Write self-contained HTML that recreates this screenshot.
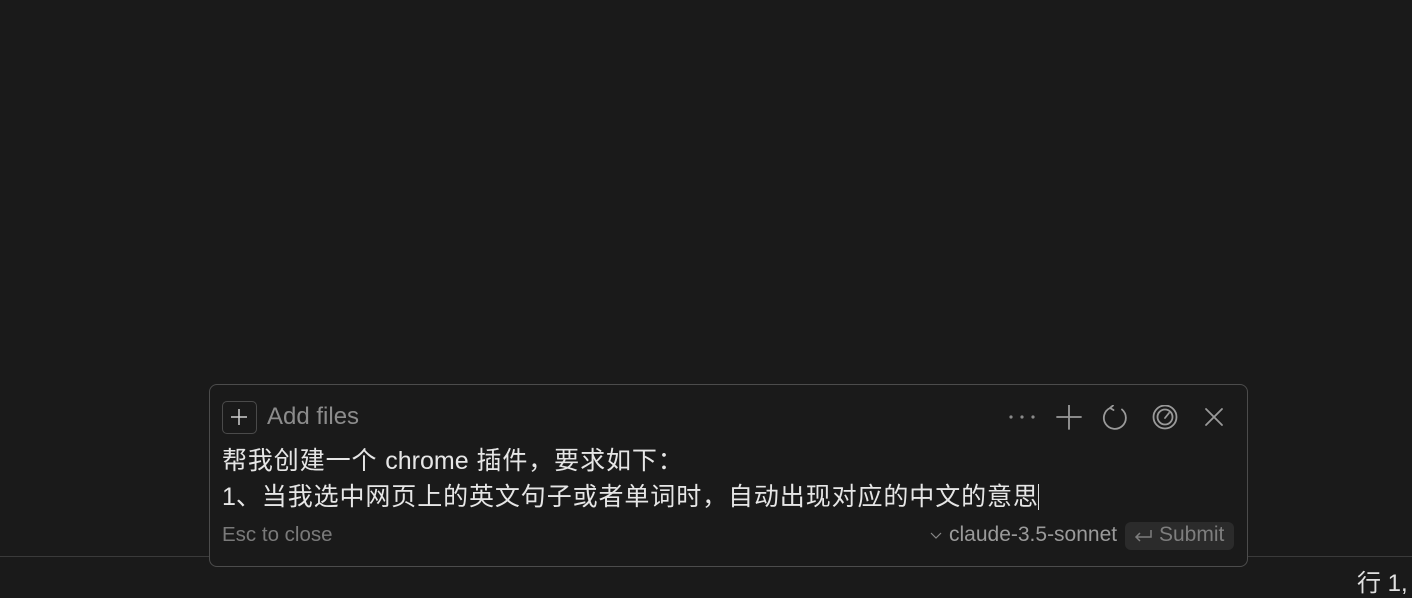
<!DOCTYPE html>
<html><head><meta charset="utf-8"><style>
*{margin:0;padding:0;box-sizing:border-box}
body{width:1412px;height:596px;background:#1a1a1a;position:relative;overflow:hidden;font-family:"Liberation Sans","Noto Sans CJK SC",sans-serif;}
.line{position:absolute;left:0;right:0;top:556px;height:1px;background:#3a3a3a}
.box{position:absolute;left:209px;top:384px;width:1039px;height:183px;border:1.5px solid #4c4c4c;border-radius:8px;background:#1a1a1a}
.t{position:absolute;white-space:nowrap}
.plus{position:absolute;left:222px;top:401px;width:35px;height:33px;border:1.5px solid #4a4a4a;border-radius:5px}
.main{color:#e6e6e6;font-size:25px;letter-spacing:0.9px}
svg{position:absolute}
</style></head><body>
<div class="line"></div>
<div class="box"></div>
<div class="plus"><svg width="32" height="30" viewBox="0 0 32 30"><path d="M16 7V23M8 15H24" stroke="#d0d0d0" stroke-width="1.5"/></svg></div>
<div class="t" style="left:267px;top:403px;font-size:24px;color:#8c8c8c">Add files</div>
<svg style="left:1006px;top:405px" width="230" height="26" viewBox="0 0 230 26">
<g fill="#8a8a8a"><circle cx="5" cy="12" r="1.6"/><circle cx="16" cy="12" r="1.6"/><circle cx="27" cy="12" r="1.6"/></g>
<g stroke="#9a9a9a" stroke-width="1.8" fill="none" stroke-linecap="round">
<path d="M63 0V24M51 12H75"/>
<path d="M104 3A11 11 0 1 0 116 4.5M104 3l3-2.5M104 3l3.5 2"/>
<circle cx="159" cy="12" r="11.5"/><circle cx="159" cy="12" r="7.5"/><path d="M159 13L163 8"/>
<path d="M200 4L216 20M216 4L200 20"/>
</g></svg>
<div class="t main" style="left:222px;top:441px">帮我创建一个 <span style="letter-spacing:0;font-size:25px">chrome</span> 插件，要求如下：</div>
<div class="t main" style="left:222px;top:477px"><span style="letter-spacing:0">1</span>、当我选中网页上的英文句子或者单词时，自动出现对应的中文的意思<span style="display:inline-block;width:1.5px;height:26px;background:#ddd;vertical-align:-5px;margin-left:-1px"></span></div>
<div class="t" style="left:222px;top:523px;font-size:20.5px;color:#7a7a7a">Esc to close</div>
<svg style="left:929px;top:530px" width="14" height="12"><path d="M2 3L7 8L12 3" stroke="#888" stroke-width="1.2" fill="none"/></svg>
<div class="t" style="left:949px;top:523px;font-size:21px;color:#9a9a9a">claude-3.5-sonnet</div>
<div class="t" style="left:1125px;top:522px;width:109px;height:28px;background:#2b2b2b;border-radius:6px;font-size:21px;color:#7e7e7e;padding:1px 0 0 34px">Submit</div>
<svg style="left:1133px;top:528px" width="22" height="16"><path d="M18 2V9H3M7 5L3 9L7 13" stroke="#7e7e7e" stroke-width="1.5" fill="none"/></svg>
<div class="t" style="left:1357px;top:563px;font-size:24px;color:#e0e0e0">行 1,</div>
</body></html>
